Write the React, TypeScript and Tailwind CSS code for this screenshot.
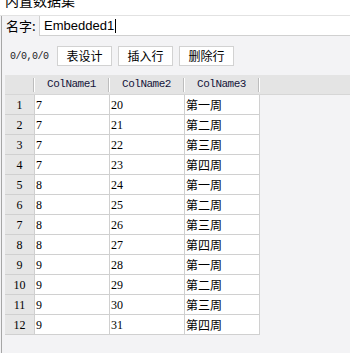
const rows = [
  ['7', '20', '第一周'],
  ['7', '21', '第二周'],
  ['7', '22', '第三周'],
  ['7', '23', '第四周'],
  ['8', '24', '第一周'],
  ['8', '25', '第二周'],
  ['8', '26', '第三周'],
  ['8', '27', '第四周'],
  ['9', '28', '第一周'],
  ['9', '29', '第二周'],
  ['9', '30', '第三周'],
  ['9', '31', '第四周'],
];

const cjk = "font-['Noto_Sans_CJK_SC',sans-serif]";
const serif = "font-['Liberation_Serif','Noto_Sans_CJK_SC',serif]";

const HeadCell = ({ label, w }: { label: string; w: string }) => (
  <div className={`flex h-full items-center ${w}`}>
    <span className="flex-1 text-center font-['Liberation_Mono',monospace] text-[11px] tracking-[-0.5px] text-[#14143a]">
      {label}
    </span>
    <span className="h-[14px] w-px bg-[#bdbdbd]" />
    <span className="h-[14px] w-px bg-white" />
  </div>
);

const ToolButton = ({ label }: { label: string }) => (
  <button className={`flex h-[20px] w-[55px] items-center justify-center border border-[#d2d2d2] bg-white text-[12px] text-black ${cjk}`}>
    {label}
  </button>
);

export default function App() {
  return (
    <div className="flex h-[353px] w-[350px] flex-col overflow-hidden bg-[#f3f3f5]">
      <div className="h-[16px] shrink-0 overflow-hidden border-b border-[#e2e2e2] bg-white">
        <div className={`-mt-[7px] pl-[5px] text-[14px] leading-[14px] text-black ${cjk}`}>内置数据集</div>
      </div>

      <div className="ml-px flex flex-1 flex-col border-l border-[#a6a6a6]">
        <div className="flex h-[20px] items-center">
          <span className={`w-[37px] pl-[4px] text-[13px] text-black ${cjk}`}>名字:</span>
          <div className="flex h-full flex-1 items-center border border-r-0 border-t-0 border-[#d0d0d0] bg-white pl-[4px]">
            <span className="font-['Liberation_Sans',sans-serif] text-[13px] text-black">Embedded1</span>
            <span className="ml-px h-[14px] w-px bg-black" />
          </div>
        </div>

        <div className="mt-[10px] flex items-center gap-[6px] pl-[8px]">
          <span className="w-[41px] font-['Liberation_Mono',monospace] text-[10px] tracking-[-0.5px] text-[#222]">0/0,0/0</span>
          <ToolButton label="表设计" />
          <ToolButton label="插入行" />
          <ToolButton label="删除行" />
        </div>

        <div className="mt-[9px] pl-[3px]">
          <div className="flex h-[20px] items-center border-b border-[#d6d6d6] bg-[#e4e4e4]">
            <HeadCell label="" w="w-[30px]" />
            <HeadCell label="ColName1" w="w-[75px]" />
            <HeadCell label="ColName2" w="w-[75px]" />
            <HeadCell label="ColName3" w="w-[75px]" />
          </div>
          {rows.map((r, i) => (
            <div key={i} className="flex h-[20px]">
              <div className={`flex w-[30px] items-center justify-center border-b border-r border-[#d0d0d0] bg-[#e6e6e6] text-[12px] text-black ${serif}`}>
                {i + 1}
              </div>
              <div className={`flex w-[75px] items-center border-b border-r border-[#d0d0d0] bg-white pl-[1px] text-[12px] text-black ${serif}`}>
                {r[0]}
              </div>
              <div className={`flex w-[75px] items-center border-b border-r border-[#d0d0d0] bg-white pl-[1px] text-[12px] text-black ${serif}`}>
                {r[1]}
              </div>
              <div className={`flex w-[75px] items-center border-b border-r border-[#d0d0d0] bg-white pl-[1px] text-[12px] text-black ${cjk}`}>
                {r[2]}
              </div>
            </div>
          ))}
        </div>
      </div>
    </div>
  );
}
